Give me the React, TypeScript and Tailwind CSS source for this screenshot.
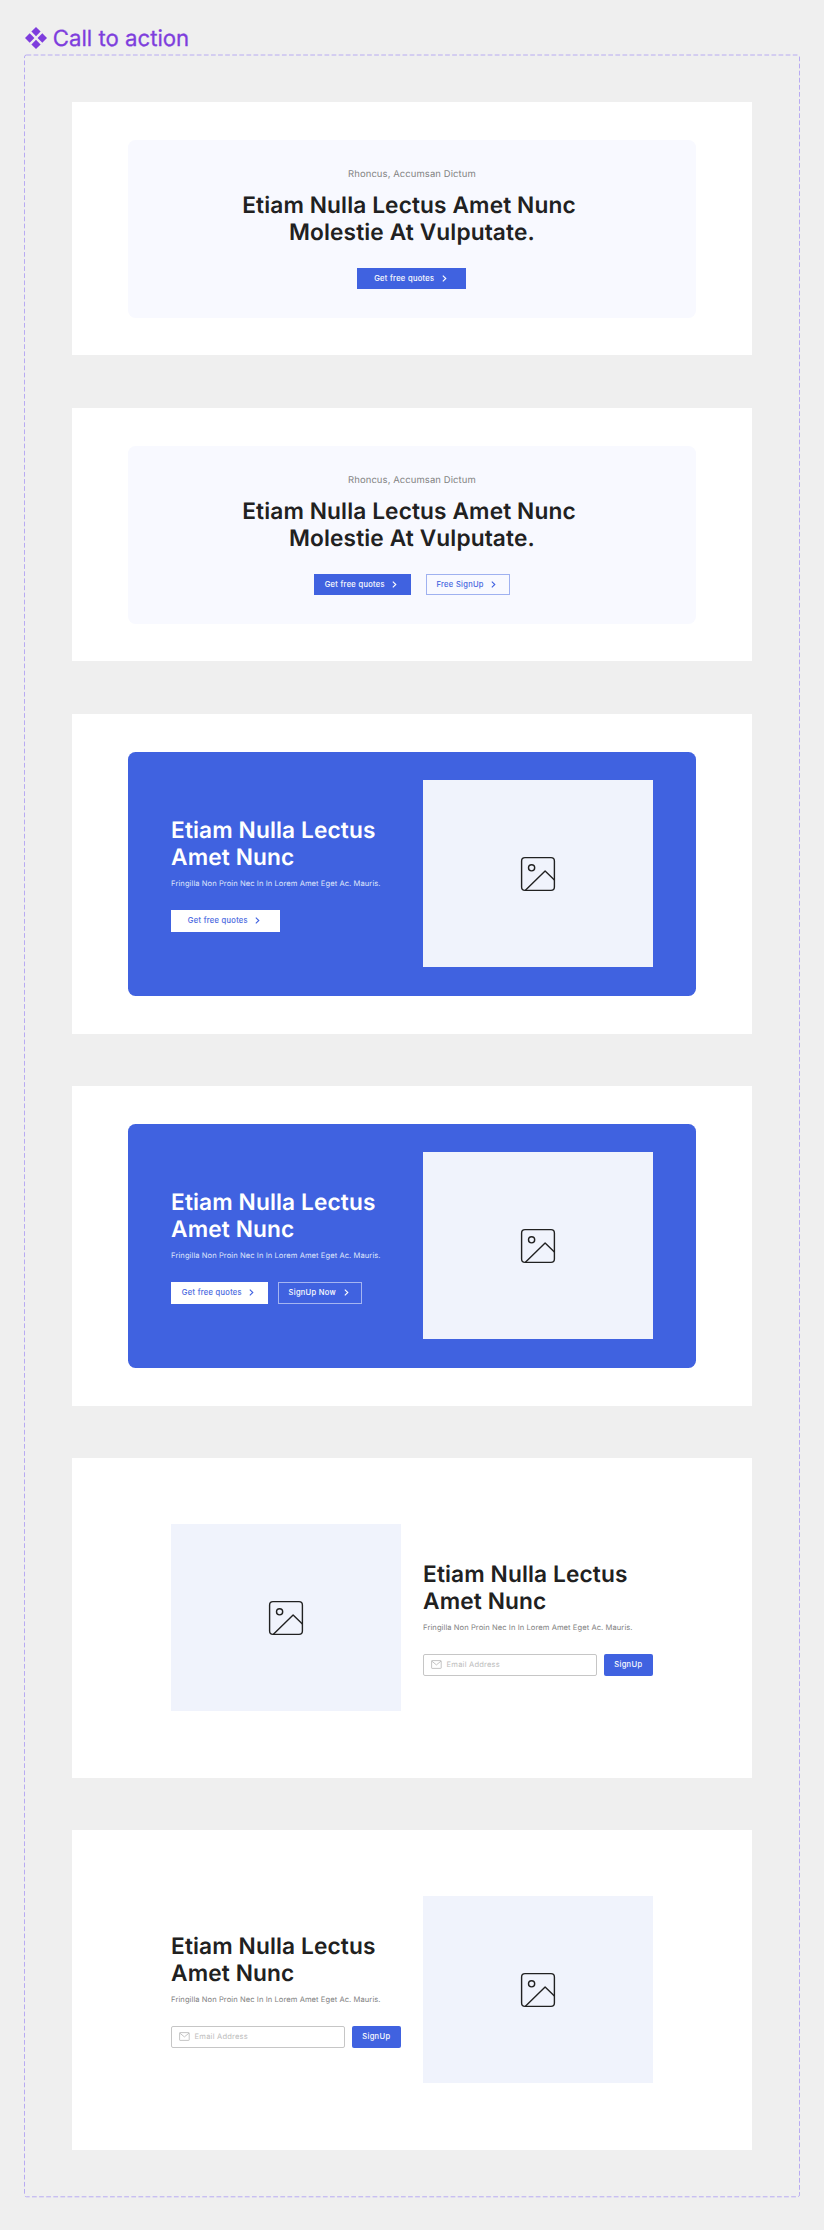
import type { ReactNode } from "react";

const FONT = "font-['Inter','Liberation_Sans',sans-serif] [text-rendering:geometricPrecision]";

function ChevronRight() {
  return (
    <svg className="mr-[3px] h-[7px] w-[5px] shrink-0" viewBox="0 0 5 7" fill="none" stroke="currentColor" strokeWidth="1.1">
      <path d="M0.8 0.6 L3.8 3.5 L0.8 6.4" />
    </svg>
  );
}

function ComponentMark() {
  return (
    <svg className="h-[22px] w-[22px]" viewBox="0 0 22 22" fill="#7e3ddd">
      <path d="M11 0 L15.6 4.6 L11 9.2 L6.4 4.6Z" />
      <path d="M11 12.8 L15.6 17.4 L11 22 L6.4 17.4Z" />
      <path d="M4.7 6.3 L9.4 11 L4.7 15.7 L0 11Z" />
      <path d="M17.3 6.3 L22 11 L17.3 15.7 L12.6 11Z" />
    </svg>
  );
}

function ImagePlaceholder() {
  return (
    <div className="flex h-[187.4px] w-[229.5px] shrink-0 items-center justify-center bg-[#f0f3fc]">
      <svg className="h-[36px] w-[36px]" viewBox="0 0 36 36" fill="none" stroke="#212121" strokeWidth="1.4">
        <rect x="1.6" y="1.6" width="32.8" height="32.8" rx="3.4" />
        <circle cx="11.6" cy="11.8" r="3.1" />
        <path d="M5.4 34.2 L25.1 14.9 L34.4 24" strokeLinejoin="round" />
      </svg>
    </div>
  );
}

function Mail() {
  return (
    <svg className="h-[9px] w-[11px] shrink-0" viewBox="0 0 11 9" fill="none" stroke="#bdbdbd" strokeWidth="0.9">
      <rect x="0.6" y="0.6" width="9.6" height="7.8" rx="0.5" />
      <path d="M0.8 1.1 L5.4 4.9 L10 1.1" />
    </svg>
  );
}

type Tone = "blue" | "white" | "blueOutline" | "whiteOutline";

const tones: Record<Tone, string> = {
  blue: "bg-[#4062e0] text-white",
  white: "bg-white text-[#4062e0]",
  blueOutline: "border border-[#9fb1f0] text-[#4062e0]",
  whiteOutline: "border border-[#a5b5f1] text-white",
};

function Button({ tone, width, children }: { tone: Tone; width: string; children: ReactNode }) {
  return (
    <button
      className={`flex h-[21.4px] items-center justify-center gap-[7.5px] text-[7.57px] tracking-[0.3px] whitespace-nowrap [-webkit-text-stroke:0.12px_currentColor] ${width} ${tones[tone]}`}
    >
      {children}
      <ChevronRight />
    </button>
  );
}

function Section({ tall, children }: { tall?: boolean; children: ReactNode }) {
  return (
    <section className={`w-[680px] bg-white px-[56.2px] pt-[37.5px] ${tall ? "mb-[52px] h-[320px]" : "mb-[53px] h-[253px]"}`}>
      {children}
    </section>
  );
}

function CenteredCard({ children }: { children: ReactNode }) {
  return (
    <div className="flex h-[178px] w-[567.5px] flex-col items-center rounded-[7.5px] bg-[#f8f9ff] pt-[28.5px]">
      <p className="text-[9.46px] leading-[14px] tracking-[0.09px] text-[#828282]">Rhoncus, Accumsan Dictum</p>
      <h2 className="mt-[10px] text-center text-[22.7px] leading-[27.4px] font-semibold tracking-[0.11px] text-[#212121]">
        Etiam Nulla Lectus Amet Nunc{"\u00a0"}
        <br />
        Molestie At Vulputate.
      </h2>
      <div className="mt-[21px] flex">{children}</div>
    </div>
  );
}

function Copy({ light, children }: { light?: boolean; children: ReactNode }) {
  return (
    <div className="w-[229.5px] pt-[1px]">
      <h2
        className={`text-[22.7px] leading-[27.4px] font-semibold tracking-[0.11px] ${light ? "text-white" : "text-[#212121]"}`}
      >
        Etiam Nulla Lectus
        <br />
        Amet Nunc
      </h2>
      <p
        className={`mt-[6.5px] text-[7.57px] leading-[12px] tracking-[0.075px] whitespace-nowrap ${light ? "text-[#dfe5fb]" : "text-[#828282]"}`}
      >
        Fringilla Non Proin Nec In In Lorem Amet Eget Ac. Mauris.
      </p>
      <div className="mt-[19.8px] flex">{children}</div>
    </div>
  );
}

function SplitCard({ blue, children }: { blue?: boolean; children: ReactNode }) {
  return (
    <div
      className={`flex h-[244.5px] w-[567.5px] items-center gap-[22.5px] rounded-[7.5px] px-[42.9px] ${blue ? "bg-[#4062e0]" : "bg-white"}`}
    >
      {children}
    </div>
  );
}

function SignUpForm() {
  return (
    <div className="flex gap-[7px]">
      <div className="flex h-[21.4px] w-[174px] items-center gap-[5px] rounded-[2px] border border-[#c6c6c6] pl-[6.5px]">
        <Mail />
        <span className="text-[7.57px] tracking-[0.2px] text-[#bdbdbd]">Email Address</span>
      </div>
      <button className="h-[21.4px] w-[48.5px] rounded-[2px] bg-[#4062e0] text-[7.57px] tracking-[0.34px] text-white [-webkit-text-stroke:0.12px_currentColor]">
        SignUp
      </button>
    </div>
  );
}

export default function App() {
  return (
    <main className={`relative h-[2230px] w-[824px] overflow-hidden bg-[#efefef] antialiased ${FONT}`}>
      <svg className="pointer-events-none absolute inset-0 h-full w-full" viewBox="0 0 824 2230" fill="none">
        <rect x="24.5" y="55" width="775" height="2141.8" rx="2" stroke="#b8abf2" strokeDasharray="4.73 2.365" />
      </svg>
      <header className="flex h-[102px] items-start gap-[6.3px] pt-[24px] pl-[24.5px] text-[#7e3ddd]">
        <div className="pt-[3px]">
          <ComponentMark />
        </div>
        <h1 className="pt-[1px] text-[22.2px] leading-[28px] [-webkit-text-stroke:0.3px_#7e3ddd]">Call to action</h1>
      </header>
      <div className="pl-[72px]">
        <Section>
          <CenteredCard>
            <Button tone="blue" width="w-[109px]">Get free quotes</Button>
          </CenteredCard>
        </Section>
        <Section>
          <CenteredCard>
            <div className="flex gap-[15px]">
              <Button tone="blue" width="w-[97px]">Get free quotes</Button>
              <Button tone="blueOutline" width="w-[84px]">Free SignUp</Button>
            </div>
          </CenteredCard>
        </Section>
        <Section tall>
          <SplitCard blue>
            <Copy light>
              <Button tone="white" width="w-[109px]">Get free quotes</Button>
            </Copy>
            <ImagePlaceholder />
          </SplitCard>
        </Section>
        <Section tall>
          <SplitCard blue>
            <Copy light>
              <div className="flex gap-[10px]">
                <Button tone="white" width="w-[97px]">Get free quotes</Button>
                <Button tone="whiteOutline" width="w-[84px]">SignUp Now</Button>
              </div>
            </Copy>
            <ImagePlaceholder />
          </SplitCard>
        </Section>
        <Section tall>
          <SplitCard>
            <ImagePlaceholder />
            <Copy>
              <SignUpForm />
            </Copy>
          </SplitCard>
        </Section>
        <Section tall>
          <SplitCard>
            <Copy>
              <SignUpForm />
            </Copy>
            <ImagePlaceholder />
          </SplitCard>
        </Section>
      </div>
    </main>
  );
}
